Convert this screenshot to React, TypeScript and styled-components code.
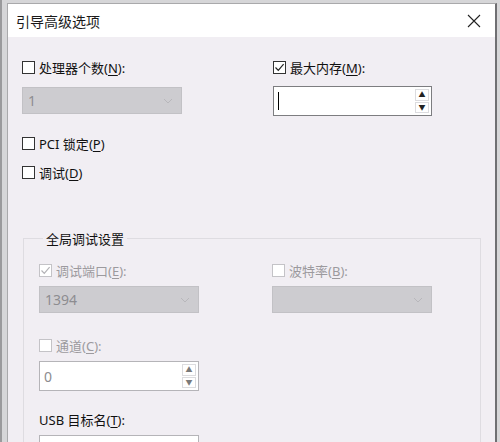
import styled, { createGlobalStyle } from 'styled-components';

const Global = createGlobalStyle`
  html, body {
    margin: 0;
    padding: 0;
    background: #cfcfd1;
  }
  body {
    font-family: 'Noto Sans', 'Noto Sans CJK SC', sans-serif;
    font-size: 13px;
    color: #000;
  }
`;

const Screen = styled.div`
  width: 500px;
  height: 442px;
  overflow: hidden;
  box-sizing: border-box;
  padding: 3px 4px 0 5px;
  background: #d6d6d8;
  border-left: 2px solid #9a9a9c;
  display: flex;
`;

const Window = styled.div`
  flex: 1;
  display: flex;
  flex-direction: column;
  background: #f1eef3;
  border-left: 1px solid #a9a9ab;
  border-top: 1px solid #a9a9ab;
  border-right: 2px solid #6f6f72;
`;

const TitleBar = styled.div`
  height: 33px;
  flex-shrink: 0;
  background: #ffffff;
  display: flex;
  align-items: center;
  justify-content: space-between;
  padding: 0 14px 0 8px;
`;

const Title = styled.div`
  font-size: 14px;
  color: #1a1a1a;
  margin-top: 1px;
`;

const CloseIcon = styled.svg`
  width: 14px;
  height: 14px;
`;

const Body = styled.div`
  padding: 21px 14px 0 14px;
  display: flex;
  flex-direction: column;
`;

const TwoCols = styled.div<{ $left: number }>`
  display: grid;
  grid-template-columns: ${(p) => p.$left}px 1fr;
`;

const Field = styled.div<{ $gap?: number }>`
  display: flex;
  flex-direction: column;
  gap: ${(p) => p.$gap ?? 6}px;
`;

const CheckRow = styled.label<{ $disabled?: boolean; $mt?: number }>`
  display: flex;
  align-items: center;
  gap: 4px;
  height: 18px;
  margin-top: ${(p) => p.$mt ?? 0}px;
  color: ${(p) => (p.$disabled ? '#9c9a9e' : '#111')};
  white-space: nowrap;
`;

const Box = styled.span<{ $disabled?: boolean }>`
  width: 13px;
  height: 13px;
  box-sizing: border-box;
  border: 1px solid ${(p) => (p.$disabled ? '#c4c3c7' : '#333')};
  background: #fff;
  display: inline-flex;
  align-items: center;
  justify-content: center;
  flex-shrink: 0;
`;

const Key = styled.span`
  text-decoration: underline;
  text-underline-offset: 2px;
`;

const Combo = styled.div<{ $w: number }>`
  width: ${(p) => p.$w}px;
  height: 27px;
  box-sizing: border-box;
  background: #cdccd0;
  border: 1px solid #c2c1c5;
  display: flex;
  align-items: center;
  justify-content: space-between;
  padding: 0 8px 0 5px;
  color: #8d8c90;
  font-size: 14px;
`;

const Spin = styled.div<{ $w: number; $dim?: boolean }>`
  width: ${(p) => p.$w}px;
  height: 30px;
  box-sizing: border-box;
  background: #fff;
  border: 1px solid ${(p) => (p.$dim ? '#b5b4b8' : '#7d7d80')};
  display: flex;
  align-items: stretch;
  padding: 2px 2px 2px 4px;
`;

const SpinText = styled.div<{ $dim?: boolean }>`
  flex: 1;
  display: flex;
  align-items: center;
  color: ${(p) => (p.$dim ? '#8d8c90' : '#000')};
  font-size: 14px;
`;

const Caret = styled.span`
  width: 1px;
  height: 18px;
  background: #000;
`;

const Arrows = styled.div`
  width: 14px;
  display: flex;
  flex-direction: column;
  gap: 1px;
`;

const ArrowBtn = styled.div<{ $dim?: boolean }>`
  flex: 1;
  border: 1px solid #dcdcdf;
  display: flex;
  align-items: center;
  justify-content: center;
  color: ${(p) => (p.$dim ? '#7a7a7a' : '#222')};
  font-size: 7px;
  line-height: 1;
`;

const Group = styled.fieldset`
  margin: 48px 0 0 1px;
  width: 458px;
  box-sizing: border-box;
  border: 1px solid #dedce1;
  border-bottom: none;
  padding: 13px 0 0 15px;
  min-height: 230px;
  display: flex;
  flex-direction: column;
`;

const Legend = styled.legend`
  padding: 0 3px;
  margin-left: 4px;
  font-size: 13px;
  color: #111;
`;

const Plain = styled.div<{ $mt?: number }>`
  height: 18px;
  display: flex;
  align-items: center;
  margin-top: ${(p) => p.$mt ?? 0}px;
  color: #111;
`;

const TextInput = styled.div`
  width: 160px;
  height: 26px;
  box-sizing: border-box;
  border: 1px solid #b5b4b8;
  background: #fff;
`;

function Check({ checked, disabled }: { checked?: boolean; disabled?: boolean }) {
  return (
    <Box $disabled={disabled}>
      {checked && (
        <svg width="11" height="11" viewBox="0 0 11 11">
          <path
            d="M1.5 5.5 L4.3 8.3 L9.6 2.2"
            fill="none"
            stroke={disabled ? '#b3b2b6' : '#222'}
            strokeWidth="1.2"
          />
        </svg>
      )}
    </Box>
  );
}

function Chevron() {
  return (
    <svg width="10" height="6" viewBox="0 0 10 6">
      <path d="M1 1 L5 5 L9 1" fill="none" stroke="#b8b7bb" strokeWidth="1" />
    </svg>
  );
}

function SpinBox({ w, value, dim, caret }: { w: number; value?: string; dim?: boolean; caret?: boolean }) {
  return (
    <Spin $w={w} $dim={dim}>
      <SpinText $dim={dim}>{caret ? <Caret /> : value}</SpinText>
      <Arrows>
        <ArrowBtn $dim={dim}>▲</ArrowBtn>
        <ArrowBtn $dim={dim}>▼</ArrowBtn>
      </Arrows>
    </Spin>
  );
}

// 체크박스 + 라벨 (단축키 글자에 밑줄)
function CheckLabel({
  text,
  k,
  colon,
  checked,
  disabled,
  mt,
}: {
  text: string;
  k: string;
  colon?: boolean;
  checked?: boolean;
  disabled?: boolean;
  mt?: number;
}) {
  return (
    <CheckRow $disabled={disabled} $mt={mt}>
      <Check checked={checked} disabled={disabled} />
      <span>
        {text}(<Key>{k}</Key>){colon ? ':' : ''}
      </span>
    </CheckRow>
  );
}

export default function App() {
  return (
    <>
      <Global />
      <Screen>
        <Window>
          <TitleBar>
            <Title>引导高级选项</Title>
            <CloseIcon viewBox="0 0 14 14">
              <path d="M1 1 L13 13 M13 1 L1 13" stroke="#222" strokeWidth="1.1" />
            </CloseIcon>
          </TitleBar>
          <Body>
            <TwoCols $left={251}>
              <Field $gap={11}>
                <CheckLabel text="处理器个数" k="N" colon />
                <Combo $w={160}>
                  1
                  <Chevron />
                </Combo>
              </Field>
              <Field $gap={10}>
                <CheckLabel text="最大内存" k="M" colon checked />
                <SpinBox w={159} caret />
              </Field>
            </TwoCols>

            <CheckLabel text="PCI 锁定" k="P" mt={18} />
            <CheckLabel text="调试" k="D" mt={11} />

            <Group>
              <Legend>全局调试设置</Legend>
              <TwoCols $left={233}>
                <Field $gap={7}>
                  <CheckLabel text="调试端口" k="E" colon checked disabled />
                  <Combo $w={160}>
                    1394
                    <Chevron />
                  </Combo>
                </Field>
                <Field $gap={7}>
                  <CheckLabel text="波特率" k="B" colon disabled />
                  <Combo $w={160}>
                    <span />
                    <Chevron />
                  </Combo>
                </Field>
              </TwoCols>
              <Field $gap={7}>
                <CheckLabel text="通道" k="C" colon disabled mt={23} />
                <SpinBox w={160} value="0" dim />
              </Field>
              <Field $gap={7}>
                <Plain $mt={19}>
                  <span>
                    USB 目标名(<Key>T</Key>):
                  </span>
                </Plain>
                <TextInput />
              </Field>
            </Group>
          </Body>
        </Window>
      </Screen>
    </>
  );
}
